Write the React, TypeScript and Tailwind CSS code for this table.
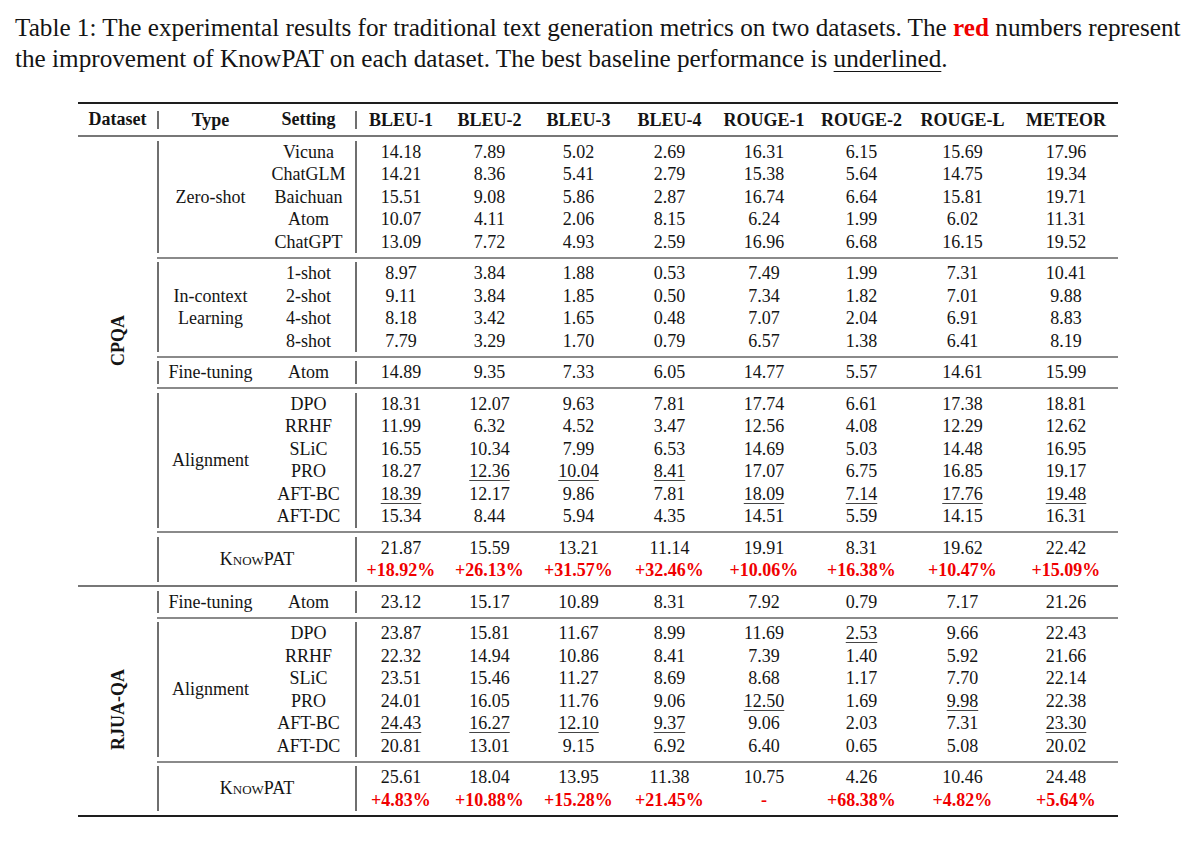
import React from 'react';

type Row = { setting: string; vals: string[] };
type Group = { label: React.ReactNode; rows: Row[] };

// metric column widths (first one loses 2px to the vertical rule)
const colW = ['w-[88px]', 'w-[89px]', 'w-[89px]', 'w-[93px]', 'w-[96px]', 'w-[99px]', 'w-[103px]', 'w-[104px]'];
const heads = ['BLEU-1', 'BLEU-2', 'BLEU-3', 'BLEU-4', 'ROUGE-1', 'ROUGE-2', 'ROUGE-L', 'METEOR'];

const r = (setting: string, s: string): Row => ({ setting, vals: s.split(' ') });

const cpqa: Group[] = [
  {
    label: 'Zero-shot',
    rows: [
      r('Vicuna', '14.18 7.89 5.02 2.69 16.31 6.15 15.69 17.96'),
      r('ChatGLM', '14.21 8.36 5.41 2.79 15.38 5.64 14.75 19.34'),
      r('Baichuan', '15.51 9.08 5.86 2.87 16.74 6.64 15.81 19.71'),
      r('Atom', '10.07 4.11 2.06 8.15 6.24 1.99 6.02 11.31'),
      r('ChatGPT', '13.09 7.72 4.93 2.59 16.96 6.68 16.15 19.52'),
    ],
  },
  {
    label: (
      <>
        In-context
        <br />
        Learning
      </>
    ),
    rows: [
      r('1-shot', '8.97 3.84 1.88 0.53 7.49 1.99 7.31 10.41'),
      r('2-shot', '9.11 3.84 1.85 0.50 7.34 1.82 7.01 9.88'),
      r('4-shot', '8.18 3.42 1.65 0.48 7.07 2.04 6.91 8.83'),
      r('8-shot', '7.79 3.29 1.70 0.79 6.57 1.38 6.41 8.19'),
    ],
  },
  {
    label: 'Fine-tuning',
    rows: [r('Atom', '14.89 9.35 7.33 6.05 14.77 5.57 14.61 15.99')],
  },
  {
    label: 'Alignment',
    rows: [
      r('DPO', '18.31 12.07 9.63 7.81 17.74 6.61 17.38 18.81'),
      r('RRHF', '11.99 6.32 4.52 3.47 12.56 4.08 12.29 12.62'),
      r('SLiC', '16.55 10.34 7.99 6.53 14.69 5.03 14.48 16.95'),
      r('PRO', '18.27 _12.36 _10.04 _8.41 17.07 6.75 16.85 19.17'),
      r('AFT-BC', '_18.39 12.17 9.86 7.81 _18.09 _7.14 _17.76 _19.48'),
      r('AFT-DC', '15.34 8.44 5.94 4.35 14.51 5.59 14.15 16.31'),
    ],
  },
];

const rjua: Group[] = [
  {
    label: 'Fine-tuning',
    rows: [r('Atom', '23.12 15.17 10.89 8.31 7.92 0.79 7.17 21.26')],
  },
  {
    label: 'Alignment',
    rows: [
      r('DPO', '23.87 15.81 11.67 8.99 11.69 _2.53 9.66 22.43'),
      r('RRHF', '22.32 14.94 10.86 8.41 7.39 1.40 5.92 21.66'),
      r('SLiC', '23.51 15.46 11.27 8.69 8.68 1.17 7.70 22.14'),
      r('PRO', '24.01 16.05 11.76 9.06 _12.50 1.69 _9.98 22.38'),
      r('AFT-BC', '_24.43 _16.27 _12.10 _9.37 9.06 2.03 7.31 _23.30'),
      r('AFT-DC', '20.81 13.01 9.15 6.92 6.40 0.65 5.08 20.02'),
    ],
  },
];

const Val = ({ v }: { v: string }) =>
  v.startsWith('_') ? (
    <span className="underline decoration-1 underline-offset-[3px] decoration-[#444]">{v.slice(1)}</span>
  ) : (
    <span>{v}</span>
  );

const MetricRow = ({ vals, red }: { vals: string[]; red?: boolean }) => (
  <div className={`flex h-[22.5px] leading-[22.5px] ${red ? 'text-[#f00000] font-bold' : ''}`}>
    {vals.map((v, i) => (
      <div key={i} className={`${colW[i]} text-center whitespace-nowrap`}>
        <Val v={v} />
      </div>
    ))}
  </div>
);

const Block = ({ g }: { g: Group }) => (
  <div className="flex py-[3.5px]">
    <div className="w-[105px] border-l-2 border-[#6f6f6f] flex items-center justify-center text-center leading-[22.5px]">
      <div>{g.label}</div>
    </div>
    <div className="w-[93px] flex flex-col">
      {g.rows.map((row) => (
        <div key={row.setting} className="h-[22.5px] leading-[22.5px] text-center whitespace-nowrap">
          {row.setting}
        </div>
      ))}
    </div>
    <div className="border-l-2 border-[#6f6f6f] flex flex-col">
      {g.rows.map((row) => (
        <MetricRow key={row.setting} vals={row.vals} />
      ))}
    </div>
  </div>
);

const KnowPat = ({ vals, gains }: { vals: string; gains: string }) => (
  <div className="flex py-[3.5px]">
    <div className="w-[198px] border-l-2 border-[#6f6f6f] flex items-center justify-center [font-variant:small-caps]">
      KnowPAT
    </div>
    <div className="border-l-2 border-[#6f6f6f] flex flex-col">
      <MetricRow vals={vals.split(' ')} />
      <MetricRow vals={gains.split(' ')} red />
    </div>
  </div>
);

const MidRule = () => <div className="h-[2px] bg-[#8a8a8a]" />;

const Section = ({
  name,
  groups,
  kp,
  shift,
}: {
  name: string;
  groups: Group[];
  kp: { vals: string; gains: string };
  shift: string;
}) => (
  <div className="flex">
    <div className={`w-[79px] flex items-center justify-center ${shift}`}>
      <span className="[writing-mode:vertical-rl] rotate-180 font-bold leading-none">{name}</span>
    </div>
    <div className="flex-1 flex flex-col">
      {groups.map((g, i) => (
        <React.Fragment key={i}>
          <Block g={g} />
          <MidRule />
        </React.Fragment>
      ))}
      <KnowPat vals={kp.vals} gains={kp.gains} />
    </div>
  </div>
);

export default function App() {
  return (
    <div className="w-[1200px] h-[844px] bg-white text-[#141414] font-['Liberation_Serif',serif] overflow-hidden">
      <div className="pl-[15px] pt-[12px] text-[25.2px] leading-[31px] whitespace-nowrap">
        <div>
          Table 1: The experimental results for traditional text generation metrics on two datasets. The{' '}
          <span className="font-bold text-[#f00000]">red</span> numbers represent
        </div>
        <div>
          the improvement of KnowPAT on each dataset. The best baseline performance is{' '}
          <span className="underline decoration-1 underline-offset-[4px]">underlined</span>.
        </div>
      </div>

      <div className="ml-[78px] w-[1040px] mt-[28px] text-[18px]">
        <div className="h-[2px] bg-[#1e1e1e]" />
        <div className="flex h-[31px] items-center font-bold">
          <div className="w-[79px] text-center">Dataset</div>
          <div className="w-[105px] h-[18px] leading-[18px] border-l-2 border-[#6f6f6f] text-center">Type</div>
          <div className="w-[93px] text-center">Setting</div>
          <div className="h-[18px] leading-[18px] border-l-2 border-[#6f6f6f] flex">
            {heads.map((h, i) => (
              <div key={h} className={`${colW[i]} text-center whitespace-nowrap`}>
                {h}
              </div>
            ))}
          </div>
        </div>
        <div className="h-[2px] bg-[#777]" />

        <Section
          name="CPQA"
          groups={cpqa}
          shift="pb-[42px]"
          kp={{
            vals: '21.87 15.59 13.21 11.14 19.91 8.31 19.62 22.42',
            gains: '+18.92% +26.13% +31.57% +32.46% +10.06% +16.38% +10.47% +15.09%',
          }}
        />
        <div className="h-[2px] bg-[#777]" />
        <Section
          name="RJUA-QA"
          groups={rjua}
          shift="pt-[18px]"
          kp={{
            vals: '25.61 18.04 13.95 11.38 10.75 4.26 10.46 24.48',
            gains: '+4.83% +10.88% +15.28% +21.45% - +68.38% +4.82% +5.64%',
          }}
        />
        <div className="h-[2.5px] bg-[#1e1e1e]" />
      </div>
    </div>
  );
}
